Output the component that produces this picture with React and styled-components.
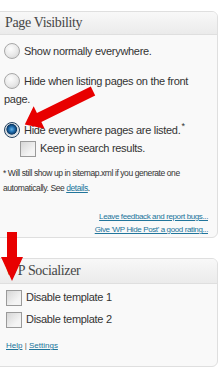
import React from 'react'
import styled, { createGlobalStyle } from 'styled-components'

const Global = createGlobalStyle`
  html, body {
    margin: 0;
    padding: 0;
    background: #fff;
  }
  body {
    font-family: 'Liberation Sans', Arial, sans-serif;
    color: #333;
    overflow: hidden;
  }
`

const Page = styled.div`
  position: relative;
  width: 222px;
  height: 370px;
  padding-top: 11px;
  box-sizing: border-box;
`

const Box = styled.div`
  margin: 0 4px ${(p) => p.$gap || 0}px -6px;
  border: 1px solid #dfdfdf;
  border-radius: 6px;
  background: #f9f9f9;
  overflow: hidden;
`

const Header = styled.div`
  height: ${(p) => p.$h}px;
  display: flex;
  align-items: center;
  padding-left: 10px;
  border-bottom: 1px solid #dfdfdf;
  background: linear-gradient(to bottom, #f8f8f8, #ebebeb);
  font-family: 'Liberation Serif', Georgia, serif;
  font-size: 14px;
  letter-spacing: -0.35px;
  color: #464646;
`

const Body = styled.div`
  padding: ${(p) => p.$pad};
`

const Option = styled.div`
  display: flex;
  align-items: flex-start;
  margin-top: ${(p) => p.$mt || 0}px;
  font-size: 11px;
  letter-spacing: -0.3px;
  line-height: 18px;
`

const Wrap = styled.div`
  font-size: 11px;
  letter-spacing: -0.3px;
  line-height: 18px;
  margin-top: ${(p) => p.$mt || 0}px;
`

const Radio = styled.span`
  flex: none;
  display: inline-block;
  width: 16px;
  height: 16px;
  margin: 1px 4px 0 0;
  border-radius: 50%;
  border: 1px solid ${(p) => (p.$on ? '#23415e' : '#a8a8a8')};
  background: ${(p) =>
    p.$on
      ? 'radial-gradient(circle at 48% 45%, #6cb6e6 0, #2373b5 2.5px, #0c3a66 5px, #cfd6dc 5.6px, #f4f4f4 8px)'
      : 'radial-gradient(circle at 40% 35%, #fdfdfd 0, #e8e8e8 55%, #cdcdcd 100%)'};
  box-sizing: border-box;
  vertical-align: -4px;
`

const Check = styled.span`
  flex: none;
  display: inline-block;
  width: 16px;
  height: 16px;
  margin: 2px 4px 0 ${(p) => p.$ml || 0}px;
  border: 1px solid #9a9a9a;
  background: linear-gradient(135deg, #d6d6d6, #f4f4f4 70%);
  box-sizing: border-box;
`

const Sup = styled.sup`
  font-size: 9px;
  line-height: 0;
  margin-left: 1px;
`

const Note = styled.p`
  margin: 9px 0 0 -1px;
  font-size: 8.5px;
  line-height: 15px;
  letter-spacing: -0.42px;
  color: #333;
`

const A = styled.a`
  color: #21759b;
  text-decoration: underline;
`

const Links = styled.div`
  margin: 14px -1px 0 0;
  text-align: right;
  font-size: 8px;
  line-height: 13px;
  letter-spacing: -0.38px;
`

const Foot = styled.div`
  margin: 11px 0 0 2px;
  font-size: 8px;
  line-height: 14px;
  color: #555;
`

const Arrows = styled.svg`
  position: absolute;
  left: 0;
  top: 0;
  pointer-events: none;
`

export default function App() {
  return (
    <Page>
      <Global />
      <Box $gap={20}>
        <Header $h={22}>Page Visibility</Header>
        <Body $pad="7px 10px 1px 9px">
          <Option>
            <Radio />
            <span>Show normally everywhere.</span>
          </Option>
          <Wrap $mt={12}>
            <Radio />
            Hide when listing pages on the front page.
          </Wrap>
          <Option $mt={13}>
            <Radio $on />
            <span>
              Hide everywhere pages are listed.<Sup>*</Sup>
            </span>
          </Option>
          <Option>
            <Check $ml={16} />
            <span>Keep in search results.</span>
          </Option>
          <Note>
            * Will still show up in sitemap.xml if you generate one
            <br />
            automatically. See <A href="#">details</A>.
          </Note>
          <Links>
            <A href="#">Leave feedback and report bugs...</A>
            <br />
            <A href="#">Give 'WP Hide Post' a good rating...</A>
          </Links>
        </Body>
      </Box>
      <Box>
        <Header $h={24}>WP Socializer</Header>
        <Body $pad="4px 10px 13px 9px">
          <Option>
            <Check $ml={2} />
            <span>Disable template 1</span>
          </Option>
          <Option $mt={4}>
            <Check $ml={2} />
            <span>Disable template 2</span>
          </Option>
          <Foot>
            <A href="#">Help</A> | <A href="#">Settings</A>
          </Foot>
        </Body>
      </Box>
      <Arrows width="222" height="370" viewBox="0 0 222 370">
        <g transform="translate(93 91) rotate(153.8)" fill="#e80000">
          <polygon points="0,-5 60,-5 60,-12.5 76,0 60,12.5 60,5 0,5" />
        </g>
        <polygon
          fill="#e80000"
          points="7,232 17,232 17,257 23,257 12,281 1,257 7,257"
        />
      </Arrows>
    </Page>
  )
}
